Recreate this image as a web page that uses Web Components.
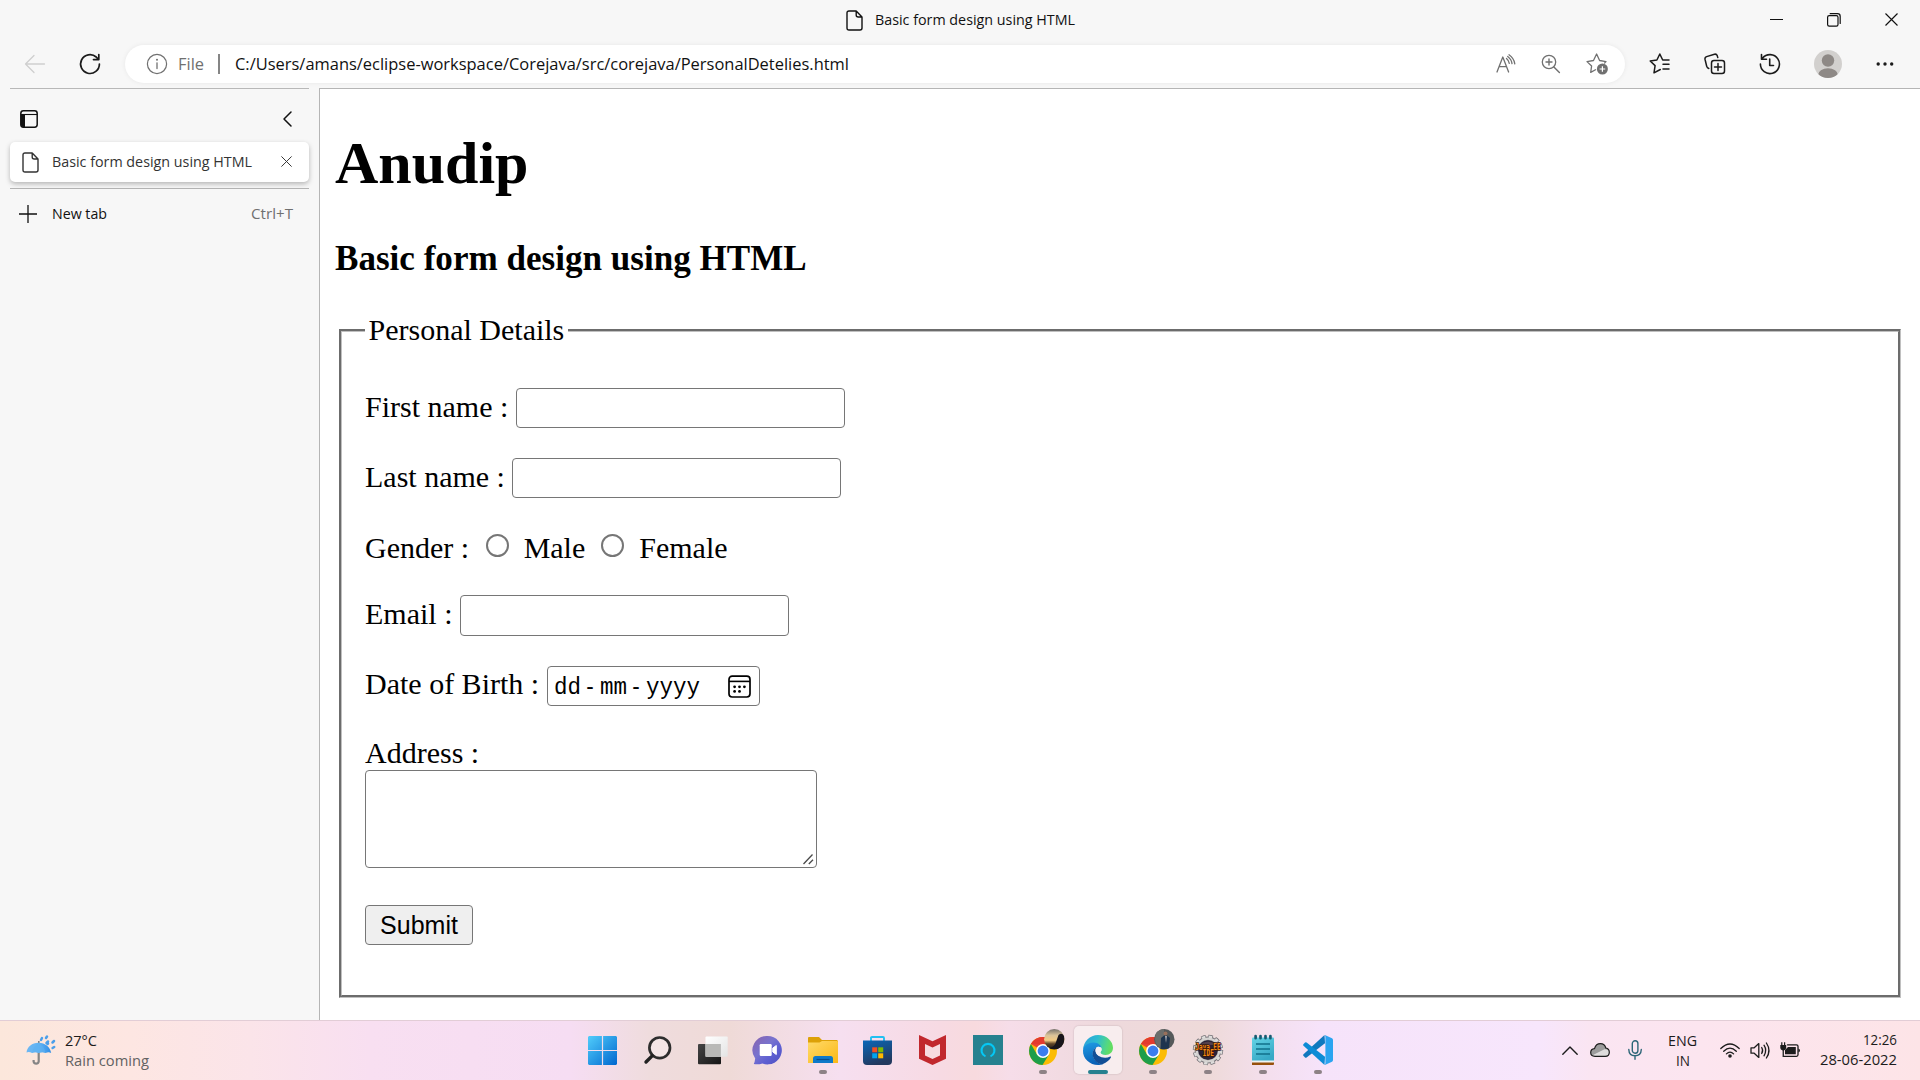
<!DOCTYPE html>
<html lang="en">
<head>
<meta charset="utf-8">
<title>Basic form design using HTML</title>
<style>
html,body{margin:0;width:1920px;height:1080px;overflow:hidden;background:#f7f7f7}
</style>
</head>
<body>
<desktop-screen></desktop-screen>
<script>
const define = (name, html, setup) => {
  const t = document.createElement('template');
  t.innerHTML = html;
  customElements.define(name, class extends HTMLElement {
    constructor() {
      super();
      this.attachShadow({ mode: 'open' }).append(t.content.cloneNode(true));
    }
    connectedCallback() { if (setup) setup(this, this.shadowRoot); }
  });
};

/* Drawings; every entry is [viewBox, markup]. */
const P = 'fill="none" stroke="currentColor" stroke-linecap="round" stroke-linejoin="round"';
const chrome = `<circle cx="14" cy="22" r="14" fill="#fbbc05"/>
<path d="M14 22L1.9 15A14 14 0 0 1 26.1 15L14 15Z" fill="#ea4335"/><path d="M1.9 15A14 14 0 0 1 26.3 15.4L14 15.3Z" fill="#e33b2e"/>
<path d="M1.9 15A14 14 0 0 0 13.5 36L20 25.5L8 25.5Z" fill="#1e9e4a"/><circle cx="14" cy="22" r="6.9" fill="#fff"/><circle cx="14" cy="22" r="5.4" fill="#3b7ded"/>`;
const ICONS = {
  back: ['0 0 22 20', `<path ${P} stroke-width="1.3" d="M20.5 10H1.5M10 1.5L1.5 10L10 18.5"/>`],
  reload: ['0 0 22 22', `<path ${P} stroke-width="1.7" d="M20.4 11A9.4 9.4 0 1 1 17.2 4L19.5 6.3M19.8 1.5V6.6H14.5"/>`],
  info: ['0 0 22 22', `<circle cx="11" cy="11" r="9.6" ${P} stroke-width="1.2"/><path ${P} stroke-width="1.3" d="M11 9.8V15.6"/><circle cx="11" cy="6.7" r="1"  fill="currentColor"/>`],
  doc: ['0 0 17 21', `<path ${P} stroke-width="1.4" d="M3 1H10.2L16 7V18Q16 20 14 20H3Q1 20 1 18V3Q1 1 3 1ZM10.2 1V5Q10.2 7 12.2 7H16"/>`],
  min: ['0 0 13 13', `<path d="M0 6.5H13" stroke="currentColor" stroke-width="1"/>`],
  max: ['0 0 14 14', `<rect x=".6" y="2.6" width="10.4" height="10.6" rx="1.6" ${P} stroke-width="1.2"/><path ${P} stroke-width="1.2" d="M3.2.7H10.5Q13.2.7 13.2 3.4V10.5"/>`],
  x: ['0 0 13 13', `<path d="M.5.5L12.5 12.5M12.5.5L.5 12.5" stroke="currentColor" stroke-width="1.15"/>`],
  aloud: ['0 0 20 20', `<path ${P} stroke-width="1.3" d="M1 18L6.8 3L12.6 18M3.1 12.6H10.6M10.5 4.4Q13 6.5 13.3 9.4M11.7 2.5Q15.6 5.5 16 9.6M13 .8Q18 4.3 18.8 9.8"/>`],
  zoomin: ['0 0 20 20', `<circle cx="8" cy="8" r="6.7" ${P} stroke-width="1.3"/><path ${P} stroke-width="1.4" d="M12.9 12.9L18.4 18.4M8 5V11M5 8H11"/>`],
  addfav: ['0 0 23 22', `<path ${P} stroke-width="1.3" d="M9.5 16.8L4.7 19.4L5.6 13L1 8.6L7.5 7.5L10.6 1L13.6 7.5L20 8.6L18.6 10"/><circle cx="16.4" cy="16" r="5.5" fill="currentColor"/><path d="M16.4 13.2V18.8M13.6 16H19.2" stroke="#fff" stroke-width="1.2"/>`],
  favs: ['0 0 22 22', `<path ${P} stroke-width="1.5" d="M11.3 16.5L5 19.8L6.1 12.6L1.2 8L7.9 7L10.8 1L13.7 7H20M14 11.3H20M14 16H20"/>`],
  coll: ['0 0 22 22', `<rect x="7.5" y="7.5" width="13" height="13" rx="2.5" ${P} stroke-width="1.5"/><path ${P} stroke-width="1.5" d="M14 10.5V17.5M10.5 14H17.5M4.8 15.4Q3.2 15 2.7 13.2L1 6.2Q.7 4.2 2.6 3.6L10.5 1.2Q12.5.8 13.2 2.6L13.8 4.6"/>`],
  hist: ['0 0 22 22', `<path ${P} stroke-width="1.6" d="M1.4 11A9.5 9.5 0 1 0 3.6 5M2.5 1.5V6.3H7.5M10.7 6V12.5H14.5"/>`],
  avatar: ['0 0 28 28', `<defs><clipPath id="c"><circle cx="14" cy="14" r="14"/></clipPath></defs><g clip-path="url(#c)"><rect width="28" height="28" fill="#d2d0ce"/><circle cx="14" cy="10.5" r="6.2" fill="#8e8986"/><ellipse cx="14" cy="25" rx="10" ry="6.8" fill="#8e8986"/></g>`],
  dots: ['0 0 18 6', `<circle cx="2.2" cy="3" r="1.7"/><circle cx="9" cy="3" r="1.7"/><circle cx="15.7" cy="3" r="1.7"/>`],
  panel: ['0 0 18 18', `<rect x=".8" y=".8" width="16.4" height="16.4" rx="2.6" ${P} stroke-width="1.5"/><path d="M1 4H5V17H3Q1 17 1 15Z"/><path d="M1 4.5H17" stroke="currentColor" stroke-width="1.1"/>`],
  chev: ['0 0 9 16', `<path ${P} stroke-width="1.5" d="M8 1L1 8L8 15"/>`],
  plus: ['0 0 18 18', `<path d="M9 0V18M0 9H18" stroke="currentColor" stroke-width="1.3"/>`],
  cal: ['0 0 23 23', `<rect x="1" y="1.2" width="21" height="20.8" rx="3.2" ${P} stroke-width="1.7"/><path d="M1 6.4H22" stroke="currentColor" stroke-width="1.6"/><g><circle cx="6.6" cy="11.8" r="1.4"/><circle cx="11.5" cy="11.8" r="1.4"/><circle cx="16.4" cy="11.8" r="1.4"/><circle cx="6.6" cy="16.4" r="1.4"/><circle cx="11.5" cy="16.4" r="1.4"/></g>`],
  grip: ['0 0 11 11', `<path d="M.5 10L9.5 .5M5.8 10L10 5.8" stroke="#4a4a4a" stroke-width="1.3"/>`],
  umbrella: ['0 0 30 30', `<defs><linearGradient id="u" x2="1"><stop stop-color="#6db7f2"/><stop offset=".5" stop-color="#63b4f5"/><stop offset="1" stop-color="#2f8de6"/></linearGradient></defs>
<path d="M12.7 14V26.5A2.6 2.6 0 0 1 7.6 26.5V25" fill="none" stroke="#858585" stroke-width="2.2"/><path d="M12.8 6V9" stroke="#777" stroke-width="1.4"/>
<path d="M.5 17.5C1.2 11.5 6.5 7.6 12.7 7.8C19 8 24 11.8 25.2 18Q22.5 16.5 19.6 18Q16.4 16.6 12.8 18Q9 16.4 6 18Q3 16.4 .5 17.5Z" fill="url(#u)"/><path d="M6 18Q7 11.5 12.7 8Q18.7 11.5 19.6 18Q16.4 16.6 12.8 18Q9 16.4 6 18Z" fill="#5eb0f0" opacity=".6"/>
<path d="M15 5L16 3M20 3L21 1.5M22 8.5L21.5 9M26.5 7.5L28 6M26.6 13L28.2 12M20.5 8L22 6.5" stroke="#4b9fea" stroke-width="2.5" stroke-linecap="round"/>`],
  start: ['0 0 29 29', `<defs><linearGradient id="s" x2="1" y2="1"><stop stop-color="#51cdfb"/><stop offset="1" stop-color="#0067cf"/></linearGradient></defs><path d="M1 0H13.9V13.9H0V1ZM15.1 0H28L29 1V13.9H15.1ZM0 15.1H13.9V29H1L0 28ZM15.1 15.1H29V28L28 29H15.1Z" fill="url(#s)"/>`],
  search: ['0 0 28 29', `<circle cx="15.7" cy="11.8" r="10.3" fill="#fff" fill-opacity=".3" stroke="#2d2d2d" stroke-width="2.7"/><path d="M8.4 19.6L2 26" stroke="#222" stroke-width="3.4" stroke-linecap="round"/>`],
  tasks: ['0 0 30 29', `<defs><linearGradient id="t" x2="1" y2="1"><stop stop-color="#454545"/><stop offset="1" stop-color="#151515"/></linearGradient><linearGradient id="t2" x2="1" y2="1"><stop stop-color="#fff"/><stop offset="1" stop-color="#e4e4e4"/></linearGradient></defs><rect y="8" width="23" height="20.3" rx="1" fill="url(#t)"/><rect x="7.5" y=".6" width="22.2" height="20.2" rx="1" fill="url(#t2)"/><rect x="7.5" y="8" width="15.4" height="12.8" fill="#b9b9b7"/>`],
  chat: ['0 0 30 30', `<defs><linearGradient id="h" x1="0" y1="0" x2="1" y2="1"><stop stop-color="#8a63ad"/><stop offset=".42" stop-color="#7773cf"/><stop offset=".65" stop-color="#5f60d2"/><stop offset="1" stop-color="#4d50c2"/></linearGradient></defs><path d="M14.6 1A14.2 14.2 0 1 1 9.4 28.4Q5 29.8.8 29Q1.8 27 2.2 23.5A14.2 14.2 0 0 1 14.6 1Z" fill="url(#h)"/><rect x="6.7" y="9" width="12" height="12" rx="1.2" fill="#fff"/><path d="M19.8 13L23.3 10.5V19.5L19.8 17Z" fill="#fff" stroke="#fff" stroke-linejoin="round"/>`],
  folder: ['0 0 30 28', `<defs><linearGradient id="f" x2="1" y2="1"><stop stop-color="#ffda69"/><stop offset="1" stop-color="#fbb816"/></linearGradient></defs><path d="M0 2Q0 1 1 1H11L14 4H29L30 5V10H0Z" fill="#dda107"/><path d="M0 6.5H11.5L14 5H29Q30 5 30 6V27H0Z" fill="url(#f)"/><path d="M5 27V22.5Q5 20 7.5 20H22.5Q25 20 25 22.5V27Z" fill="#0f79c9"/><path d="M8.5 23.5H21.5" stroke="#084e8e" stroke-width="1.2"/>`],
  store: ['0 0 29 29', `<defs><linearGradient id="m" x2=".4" y2="1"><stop stop-color="#0a67b8"/><stop offset="1" stop-color="#22395f"/></linearGradient></defs><path d="M8 6V1.7Q8 1 9 1H20Q21 1 21 2V6" fill="none" stroke="#22c0f1" stroke-width="1.9"/><path d="M0 4.5H29V25Q29 29 25 29H4Q0 29 0 25Z" fill="url(#m)"/><path d="M9.2 11.3h5v5h-5z" fill="#f25022"/><path d="M15.2 11.3h5v5h-5z" fill="#7fba00"/><path d="M9.2 17.3h5v5h-5z" fill="#00a4ef"/><path d="M15.2 17.3h5v5h-5z" fill="#ffb900"/>`],
  shield: ['0 0 27 30', `<path d="M0 0L13.5 6.3L27 0V23.8L13.5 30L0 23.8Z" fill="#c1282d"/><path d="M6 9L13.5 12.5L21 9V20.4L13.5 24L6 20.4Z" fill="#f7dbe0"/>`],
  alexa: ['0 0 30 30', `<rect width="30" height="30" fill="#26818f"/><path d="M12.5 21.4A6.5 6.5 0 1 1 17.5 21.4" fill="none" stroke="#05c8f5" stroke-width="2.1"/>`],
  chromeA: ['0 0 36 36', chrome + `<defs><linearGradient id="q" y2="1" x2="0"><stop stop-color="#77736d"/><stop offset=".3" stop-color="#d9c299"/><stop offset=".55" stop-color="#f3cb83"/><stop offset=".72" stop-color="#604526"/><stop offset="1" stop-color="#161419"/></linearGradient></defs><circle cx="25.3" cy="10.3" r="10.2" fill="url(#q)"/><path d="M27 13L29.5 6Q33 3 35 7Q36.4 13 32 18Q27 21.500 20 19Q26 18 27 13Z" fill="#18151b"/>`],
  chromeB: ['0 0 36 36', chrome + `<circle cx="25.3" cy="10.3" r="10.2" fill="#55595a"/><path d="M17 4Q21 0 25 0V20Q16 18 16 10Z" fill="#6a6d6b"/><path d="M21.5 20L22 9L25 6.5H28L31 9L30 19Q26 21 21.5 20Z" fill="#1d344e"/><circle cx="26.5" cy="4.5" r="2" fill="#98705b"/><path d="M26 7L27 14L28 7Z" fill="#a8a9b0"/>`],
  edge: ['0 0 30 30', `<defs><linearGradient id="e1" x2="1" y2=".2"><stop stop-color="#2d9edc"/><stop offset=".5" stop-color="#2dbcd0"/><stop offset=".85" stop-color="#53d783"/><stop offset="1" stop-color="#62dd63"/></linearGradient><linearGradient id="e2" y2="1" x2=".2"><stop stop-color="#1f9be4"/><stop offset="1" stop-color="#0a62b7"/></linearGradient></defs>
<path d="M0 14.8C.5 6.5 6.8 0 15 0C23.8 0 30 6.3 30 12.8C30 17 26.7 20 22.6 20C19.8 20 17.4 19 17.4 17.5C17.4 16.5 18.6 16.3 18.6 14C18.6 11.4 15.8 8.800 11 8.800C6 8.800 2 11.500 0 14.800Z" fill="url(#e1)"/>
<path d="M0 15.5C.3 10.5 5.5 7.6 10.4 7.6C15 7.6 18.6 10.5 18.6 14C18 12 15.6 11.4 13.8 12.2C10.8 13.5 9.6 16.3 9.8 19.2C10 24 14.5 29 20 29C18.5 29.7 16.5 30 15 30C7 30-.4 23.8 0 15.5Z" fill="url(#e2)"/>
<path d="M13.8 12.2C9.8 13.8 9.2 18.4 9.8 20.8C10.8 25.5 15 29.4 19.5 29.2C23.8 27.8 26.8 24.8 28 22.3C28.3 21.6 27.8 21.3 27.2 21.6C21.4 24.5 12.6 21.8 12.5 15.6C12.5 14.1 13 12.8 13.8 12.2Z" fill="#124f96"/><path d="M18.600 14C18.600 11.800 15.600 11 13.800 12.200C12.600 13.200 12.400 15 12.600 16.500C13 18.500 14.500 20 16.500 21L19.500 19.500C18 19 17.200 18.300 17.400 17.500C17.400 16.500 18.600 16.300 18.600 14Z" fill="#f6f0f2"/>`],
  java: ['0 0 30 30', `<g transform="translate(15 15)"><circle r="13.2" fill="none" stroke="#6f6d72" stroke-width="4" stroke-dasharray="4.300 2.610"/><circle r="11.600" fill="#2b2236" stroke="#77757a" stroke-width="3.600"/><circle r="13" fill="none" stroke="#dedddb" stroke-width="3" stroke-dasharray="3.300 3.507" stroke-dashoffset="-.4"/><circle r="11.300" fill="none" stroke="#d5d3d1" stroke-width="2.200"/><path d="M-9-5Q0-12 9-5Z" fill="#54404b"/></g><g font-family="DejaVu Sans Mono,monospace" font-weight="700" font-size="8" fill="#f58a14" stroke="#35160a" stroke-width="1.600" paint-order="stroke" text-anchor="middle"><text x="15" y="14.500" textLength="25" lengthAdjust="spacingAndGlyphs">Java EE</text><text x="15.300" y="21.400" textLength="11" lengthAdjust="spacingAndGlyphs">IDE</text></g>`],
  note: ['0 0 22 30', `<defs><linearGradient id="n" y2="1" x2=".5"><stop stop-color="#65d4e6"/><stop offset="1" stop-color="#37a9c6"/></linearGradient></defs><path d="M0 26H22V29Q22 30 21 30H0Z" fill="#97500c"/><path d="M0 24H22V27.5H0Z" fill="#eef3f3"/><path d="M0 3.5Q0 2.5 1 2.5H21Q22 2.5 22 3.5V25.5H0Z" fill="url(#n)"/><path d="M3.6 1V3.2M8.5 1V3.2M13.5 1V3.2M18.4 1V3.2" stroke="#175c72" stroke-width="2.7" stroke-linecap="round"/><path d="M4 9H18M4 14H18M4 19H18" stroke="#10708a" stroke-width="1.6"/>`],
  code: ['0 0 30 30', `<path d="M22 8.3L3.6 22.5Q2.8 23 2 22.4L.4 20.8Q-.3 20 .5 19.2L21.5 0Z" fill="#1079be"/><path d="M22 21.7L3.6 7.5Q2.8 7 2 7.6L.4 9.2Q-.3 10 .5 10.8L21.5 30Z" fill="#0d8cd6"/><path d="M21.8 0L29 3.3Q30 3.8 30 5V25Q30 26.2 29 26.7L21.8 30Q22.4 29 22.4 28V2Q22.4 1 21.8 0Z" fill="#2ba4f0"/>`],
  up: ['0 0 16 9', `<path ${P} stroke-width="1.4" d="M.8 8.2L8 1L15.2 8.2"/>`],
  cloud: ['0 0 20 14', `<path d="M5 13.3Q.7 13.3.7 9.5Q.7 6 4.5 5.6Q6 .7 10.4.7Q14.8.7 15.8 5Q19.3 5.7 19.3 9.2Q19.3 13.3 15.3 13.3Z" fill="#9c9c9c"/><path d="M2 12.4L14.5 6.2Q19 6 19 9.5Q19 13 15 13H5Z" fill="#dedcdc"/><path ${P} stroke-width="1.2" d="M5 13.3Q.7 13.3.7 9.5Q.7 6 4.5 5.6Q6 .7 10.4.7Q14.8.7 15.8 5Q19.3 5.7 19.3 9.2Q19.3 13.3 15.3 13.3Z"/>`],
  mic: ['0 0 14 20', `<g ${P} stroke-width="1.4"><rect x="4.3" y=".8" width="5.6" height="12.4" rx="2.8"/><path d="M.8 9.5Q1 15.8 7 15.8Q13 15.8 13.3 9.5M7 15.8V19.2"/></g>`],
  wifi: ['0 0 20 15', `<g ${P} stroke-width="1.3"><path d="M.8 5.5Q10-3.6 19.2 5.5M3.7 8.3Q10 1.9 16.3 8.3M6.4 10.9Q10 7.4 13.6 10.9"/></g><circle cx="10" cy="13" r="1.8"/>`],
  sound: ['0 0 20 17', `<g ${P} stroke-width="1.3"><path d="M1 5.8H4.2L8.8 1.6V15.4L4.2 11.2H1ZM11.7 5.5Q13.6 8.5 11.7 11.5M14 3.2Q17.4 8.5 14 13.8M16.4 1Q21.5 8.5 16.4 16"/></g>`],
  battery: ['0 0 20 16', `<path d="M7.5 2.8H16.5Q18 2.8 18 4.3V12.8Q18 14.3 16.5 14.3H3.8" ${P} stroke-width="1.3"/><path d="M5 8L8 5H15.8V12.3H5Z"/><path d="M18.4 6.5Q20 6.8 20 8.6Q20 10.3 18.4 10.6Z"/><path d="M.3 3H1.2V.3H2.4V3H4V.3H5.2V3H6.2V6Q6 8 3.9 8.4V15H2.6V8.4Q.4 8 .3 6Z"/>`]
};

define('ui-icon', `<style>:host{display:block;flex:none}svg{display:block;overflow:visible;fill:currentColor;width:100%;height:100%}</style>`, (el, root) => {
  const [box, art] = ICONS[el.getAttribute('name')];
  const s = box.split(' ');
  el.style.width = s[2] + 'px';
  el.style.height = s[3] + 'px';
  root.innerHTML += `<svg viewBox="${box}">${art}</svg>`;
});

/* A single line of text condensed or widened to the width in its "w" attribute. */
define('fit-text', `<style>:host{display:block;flex:none;white-space:nowrap}span{display:inline-block;transform-origin:0 50%}</style><span><slot></slot></span>`, (el, root) => {
  const w = +el.getAttribute('w'), s = root.querySelector('span');
  el.style.width = w + 'px';
  s.style.transform = `scaleX(${w / s.getBoundingClientRect().width})`;
});

define('title-bar', `<style>
:host{display:flex;height:40px;color:#111;font:14.5px/20px "Open Sans",sans-serif}
.t{display:flex;padding:10px 0 0 846px;gap:12px}
.w{display:flex;margin-left:auto;padding:13px 22px 0 0}.w *{margin-left:44px}</style>
<div class="t"><ui-icon name="doc"></ui-icon><fit-text w="200">Basic form design using HTML</fit-text></div>
<div class="w"><ui-icon name="min"></ui-icon><ui-icon name="max"></ui-icon><ui-icon name="x"></ui-icon></div>`);

define('address-bar', `<style>
:host{display:flex;align-items:center;height:48px;padding-left:24px;color:#1b1b1b;font:17px/36px "Open Sans",sans-serif}
.back{color:#cfcfcf;margin-right:33px}.pill{display:flex;align-items:center;width:1500px;height:38px;border-radius:19px;background:#fff;margin-left:24px;box-shadow:0 0 5px #0001;box-sizing:border-box;padding-left:21px;color:#707070}
i{width:1.5px;height:20px;background:#858585;margin:0 15.5px 0 14px}.url{color:#111}.file{margin-left:10px}fit-text{margin-top:-1px}
.tools{display:flex;align-items:center;margin-left:auto;gap:25px;padding-right:16px}
.more{display:flex;align-items:center;margin-left:24px;gap:33px}</style>
<ui-icon class="back" name="back"></ui-icon><ui-icon name="reload"></ui-icon>
<div class="pill"><ui-icon name="info"></ui-icon><fit-text class="file" w="26">File</fit-text><i></i><fit-text class="url" w="614">C:/Users/amans/eclipse-workspace/Corejava/src/corejava/PersonalDetelies.html</fit-text>
<div class="tools"><ui-icon name="aloud"></ui-icon><ui-icon name="zoomin"></ui-icon><ui-icon name="addfav"></ui-icon></div></div>
<div class="more"><ui-icon name="favs"></ui-icon><ui-icon name="coll"></ui-icon><ui-icon name="hist"></ui-icon><ui-icon name="avatar"></ui-icon><ui-icon name="dots" style="margin-left:1px"></ui-icon></div>`);

define('tab-panel', `<style>
:host{display:block;width:299px;padding:0 10px;font:14.5px/20px "Open Sans",sans-serif;color:#111}
.top{display:flex;justify-content:space-between;border-top:1px solid #b8b8b8;height:54px;box-sizing:border-box;padding:21px 17px 0 10px}
.top ui-icon:last-child{margin-top:1px}
.tab{display:flex;align-items:center;height:40px;background:#fff;border-radius:5px;box-shadow:0 2px 5px #0004;padding-left:12px;color:#333}
.tab fit-text{margin:0 29px 0 13px}
.new{display:flex;align-items:center;border-top:1px solid #b3b3b3;margin-top:6px;padding:15px 0 0 9px}
.new fit-text{margin-left:15px}.new .k{color:#707070;margin-left:144px}</style>
<div class="top"><ui-icon name="panel"></ui-icon><ui-icon name="chev"></ui-icon></div>
<div class="tab"><ui-icon name="doc"></ui-icon><fit-text w="200">Basic form design using HTML</fit-text><ui-icon name="x" style="zoom:.85"></ui-icon></div>
<div class="new"><ui-icon name="plus"></ui-icon><fit-text w="55">New tab</fit-text><fit-text class="k" w="42">Ctrl+T</fit-text></div>`);

define('form-row', `<style>
:host{display:flex;align-items:flex-start;height:40px}
label{line-height:var(--lh,38px);white-space:pre}</style><label></label><slot></slot>`, (el, root) => {
  root.querySelector('label').textContent = el.getAttribute('label') + ' ';
});

define('text-field', `<style>:host{display:block;flex:none;width:329px;height:100%}
input{display:block;box-sizing:border-box;width:100%;height:100%;border:1px solid #767676;border-radius:4px;padding:0 6px;background:#fff;outline:0}</style><input>`);

define('date-field', `<style>:host{display:flex;box-sizing:border-box;width:213px;height:40px;border:1px solid #767676;border-radius:4px;padding:8px 8px 0 6px;justify-content:space-between;font:24px/24px "Liberation Mono",monospace}
.d{display:flex;gap:3.5px;margin-top:1px}</style><div class="d"><fit-text w="27">dd</fit-text><fit-text w="12">-</fit-text><fit-text w="27">mm</fit-text><fit-text w="12">-</fit-text><fit-text w="54">yyyy</fit-text></div><ui-icon name="cal" style="margin-top:-.5px"></ui-icon>`);

define('radio-option', `<style>:host{display:flex;line-height:42px}
input{appearance:none;flex:none;box-sizing:border-box;width:23px;height:23px;border:2px solid #767676;border-radius:50%;margin:7px 15px 0 0;background:#fff}</style><input type="radio"><slot></slot>`);

define('address-field', `<style>:host{display:flex;align-items:flex-end;justify-content:flex-end;box-sizing:border-box;width:452px;height:98px;border:1px solid #767676;border-radius:4px;padding:2px;background:#fff}</style><ui-icon name="grip"></ui-icon>`);

define('form-page', `<style>
:host{display:block;flex:1;background:#fff;border-top:1px solid #b5b5b5;border-left:1px solid #b5b5b5;box-sizing:border-box;height:932px;padding:0 19px 0 15px;color:#000;font:30px/34px "Liberation Serif",serif}
h1{font-size:60px;line-height:68px;margin:40px 0 0}h3{font-size:35.1px;line-height:40px;margin:42px 0 0}
fieldset{box-sizing:border-box;margin:34px 0 0 4px;border:3px groove #c0c0c0;padding:41px 23px 50px;height:685px;min-width:0}
legend{padding:0 4px 0 3.5px;line-height:34px}
button{display:block;box-sizing:border-box;width:108px;height:40px;margin-top:37px;border:1px solid #767676;border-radius:4px;background:#efefef;color:#000;padding:1px 0 0;font:25px "Liberation Sans",sans-serif}
</style>
<h1>Anudip</h1><h3>Basic form design using HTML</h3>
<fieldset><legend>Personal Details</legend>
<form-row label="First name :"><text-field></text-field></form-row>
<form-row label="Last name :" style="margin-top:30px"><text-field></text-field></form-row>
<form-row label="Gender :" style="margin-top:29px;--lh:42px"><radio-option style="margin-left:9px">Male</radio-option><radio-option style="margin-left:16px">Female</radio-option></form-row>
<form-row label="Email :" style="margin-top:28px;height:41px;--lh:37px"><text-field></text-field></form-row>
<form-row label="Date of Birth :" style="margin-top:30px;--lh:36px"><date-field></date-field></form-row>
<form-row label="Address :" style="margin-top:29px;height:35px;--lh:35px"></form-row>
<address-field></address-field>
<button>Submit</button>
</fieldset>`);

define('task-item', `<style>
:host{display:flex;flex:none;width:55px;height:60px;align-items:flex-start;justify-content:center;position:relative}
.b{display:flex;align-items:center;justify-content:center;width:48px;height:48px;margin-top:6px;border-radius:5px}
:host([on]) .b{background:#faf1f3cc;box-shadow:0 0 2px #0003}
i{position:absolute;bottom:6px;left:24px;width:8px;height:4px;border-radius:2px;background:#8d8286;display:none}
:host([run]) i,:host([on]) i{display:block}:host([on]) i{left:18px;width:20px;background:#26818f}</style>
<div class="b"></div><i></i>`, (el, root) => {
  const ic = document.createElement('ui-icon');
  ic.setAttribute('name', el.getAttribute('icon'));
  root.querySelector('.b').append(ic);
  if (el.getAttribute('icon').startsWith('chrome')) ic.style.margin = '-6px 0 0 8px';
});

define('task-bar', `<style>
:host{display:flex;height:60px;box-sizing:border-box;color:#1c1c1c;font:14.5px/20px "Open Sans",sans-serif;box-shadow:inset 0 1px #e2cdd6;
background:linear-gradient(90deg,#fce7db 0,#fde6e2 130px,#fbe4e9 250px,#f8dff1 370px,#f6ddf3 570px,#efdcdd 650px,#efdad7 730px,#f6dff0 840px,#f7dae3 940px,#f8dade 975px,#f6dde9 1010px,#eed9dc 1110px,#eedad9 1210px,#f4dfee 1270px,#f6e3fa 1320px,#f7e6fc 1540px,#fae5f2 1590px,#fce5ef 1700px,#fde4e7 1920px)}
.wx{display:flex;width:549px;padding:15px 0 0 26px;box-sizing:content-box;flex:none}.wx div{margin:-4px 0 0 9px}.g{color:#626262}
.tray{display:flex;align-items:center;margin-left:217px}
.col{display:flex;flex-direction:column;align-items:center}.r{align-items:flex-end}</style>
<div class="wx"><ui-icon name="umbrella"></ui-icon><div><fit-text w="32">27°C</fit-text><fit-text class="g" w="84">Rain coming</fit-text></div></div>
<task-item icon="start"></task-item><task-item icon="search"></task-item><task-item icon="tasks"></task-item><task-item icon="chat"></task-item><task-item icon="folder" run></task-item><task-item icon="store"></task-item><task-item icon="shield"></task-item><task-item icon="alexa"></task-item><task-item icon="chromeA" run></task-item><task-item icon="edge" on></task-item><task-item icon="chromeB" run></task-item><task-item icon="java" run></task-item><task-item icon="note" run></task-item><task-item icon="code" run></task-item>
<div class="tray"><ui-icon name="up"></ui-icon><ui-icon name="cloud" style="margin-left:12px"></ui-icon><ui-icon name="mic" style="margin-left:18px;color:#2d6678"></ui-icon>
<div class="col" style="margin-left:26px;margin-top:1px"><fit-text w="29">ENG</fit-text><fit-text w="14">IN</fit-text></div>
<ui-icon name="wifi" style="margin-left:23px"></ui-icon><ui-icon name="sound" style="margin-left:10px"></ui-icon><ui-icon name="battery" style="margin-left:10px"></ui-icon>
<div class="col r" style="margin-left:20px;margin-top:-1px"><fit-text w="34">12:26</fit-text><fit-text w="77">28-06-2022</fit-text></div></div>`);

define('desktop-screen', `<style>:host{display:flex;flex-direction:column;width:1920px;height:1080px;background:#f7f7f7;overflow:hidden}.m{display:flex;height:932px}</style>
<title-bar></title-bar><address-bar></address-bar><div class="m"><tab-panel></tab-panel><form-page></form-page></div><task-bar></task-bar>`);
</script>
</body>
</html>
